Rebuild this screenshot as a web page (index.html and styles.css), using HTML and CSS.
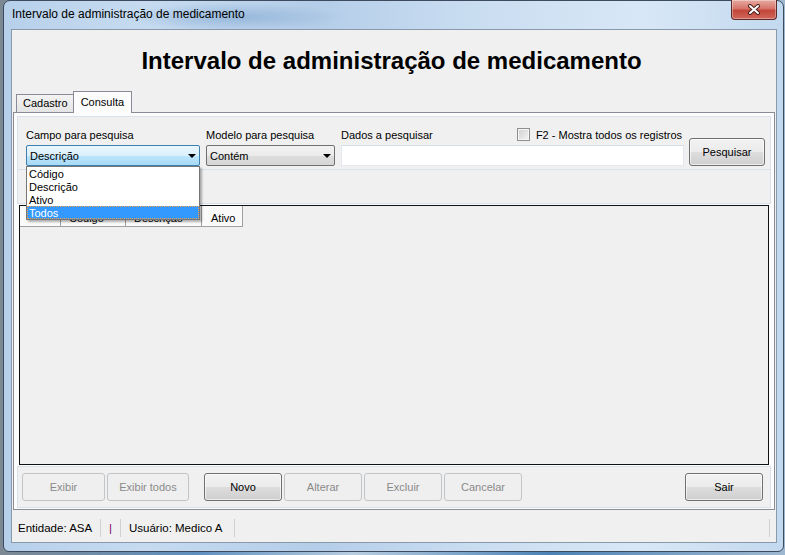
FILE: index.html
```html
<!DOCTYPE html>
<html lang="pt-BR">
  <head>
    <meta charset="UTF-8" />
    <meta name="viewport" content="width=device-width, initial-scale=1.0" />
    <title>Intervalo de administração de medicamento</title>
    <link rel="stylesheet" href="styles.css">
  </head>
  <body>
    <div class="window">
      <div class="titlebar">
        <span class="title">Intervalo de administração de medicamento</span>
        <button class="close" type="button">
          <svg width="14" height="11" viewBox="0 0 14 11">
            <path d="M3 2 L11 9 M11 2 L3 9" stroke="#4a1f1a" stroke-width="4" stroke-linecap="round" />
            <path d="M3 2 L11 9 M11 2 L3 9" stroke="#ffffff" stroke-width="2" stroke-linecap="round" />
          </svg>
        </button>
      </div>

      <div class="client">
        <h1 class="heading">Intervalo de administração de medicamento</h1>

        <div class="tabs">
          <div class="tab">Cadastro</div>
          <div class="tab active">Consulta</div>
        </div>

        <div class="tabpage">
          <!-- filtros da consulta -->
          <div class="panel search">
            <div class="field campo">
              <label class="lbl">Campo para pesquisa</label>
              <div class="combo open">
                <span>Descrição</span>
                <span class="arrow"></span>
              </div>
              <ul class="dropdown">
                <li>Código</li>
                <li>Descrição</li>
                <li>Ativo</li>
                <li class="sel">Todos</li>
              </ul>
            </div>

            <div class="field modelo">
              <label class="lbl">Modelo para pesquisa</label>
              <div class="combo">
                <span>Contém</span>
                <span class="arrow"></span>
              </div>
            </div>

            <div class="field dados">
              <div class="lbl-row">
                <label class="lbl">Dados a pesquisar</label>
                <label class="check">
                  <span class="box"></span>
                  F2 - Mostra todos os registros
                </label>
              </div>
              <div class="input"></div>
            </div>

            <button class="btn btn-search" type="button">Pesquisar</button>
          </div>

          <div class="panel strip"></div>

          <!-- grade de resultados -->
          <div class="grid">
            <div class="grid-head">
              <div class="cell ind"></div>
              <div class="cell c-cod">Código</div>
              <div class="cell c-desc">Descrição</div>
              <div class="cell c-ativo">Ativo</div>
            </div>
          </div>

          <div class="panel actions">
            <button class="btn w83" type="button" disabled>Exibir</button>
            <button class="btn w82" type="button" disabled>Exibir todos</button>
            <button class="btn novo" type="button">Novo</button>
            <button class="btn" type="button" disabled>Alterar</button>
            <button class="btn" type="button" disabled>Excluir</button>
            <button class="btn" type="button" disabled>Cancelar</button>
            <button class="btn sair" type="button">Sair</button>
          </div>
        </div>

        <div class="statusbar">
          <div class="sb-item sb-ent">Entidade: ASA</div>
          <div class="sb-item sb-sep"><span class="pipe">|</span></div>
          <div class="sb-item sb-user">Usuário: Medico A</div>
          <div class="sb-item sb-rest"></div>
        </div>
      </div>
    </div>
  </body>
</html>
```

FILE: styles.css
```css
* {
  margin: 0;
  padding: 0;
  box-sizing: border-box;
}

body {
  width: 785px;
  height: 555px;
  overflow: hidden;
  background: linear-gradient(to right, #7d8893 0%, #5f8fbf 25%, #b8cde0 45%, #4c82b6 70%, #9fb8d0 100%);
  font-family: "Liberation Sans", Arial, sans-serif;
  font-size: 11px;
  color: #000;
}

/* moldura da janela (Aero) */
.window {
  margin-left: 3px;
  width: 781px;
  height: 552px;
  border: 1px solid #3c4c5e;
  border-radius: 7px 7px 6px 6px;
  padding: 0 6px 8px 7px;
  display: flex;
  flex-direction: column;
  background:
    radial-gradient(ellipse 110px 14px at 230px 16px, rgba(120, 160, 205, 0.55), transparent),
    linear-gradient(to right, #b7d0ea 0%, #c6dbf0 18%, #b4cde8 40%, #c9ddf1 60%, #d8e7f6 82%, #c3d9ef 100%);
}

.titlebar {
  height: 28px;
  display: flex;
  align-items: flex-start;
  justify-content: space-between;
}

.title {
  padding: 6px 0 0 1px;
  font-size: 12px;
  line-height: 15px;
}

.close {
  width: 46px;
  height: 20px;
  margin-top: -1px;
  border: 1px solid #5b2a26;
  border-top: none;
  border-radius: 0 0 4px 4px;
  background: linear-gradient(#e6aaa0 0%, #d7746a 45%, #c4463b 55%, #d0665a 100%);
  box-shadow: inset 0 0 0 1px rgba(255, 255, 255, 0.35);
  display: flex;
  align-items: center;
  justify-content: center;
}

.client {
  height: 514px;
  border: 1px solid #8899ab;
  background: #f0f0f0;
  display: flex;
  flex-direction: column;
}

.heading {
  height: 61px;
  padding-right: 5px;
  text-align: center;
  font: bold 24px "Liberation Sans", Arial, sans-serif;
  line-height: 61px;
}

/* abas */
.tabs {
  height: 21px;
  display: flex;
  align-items: flex-end;
  margin-left: 1px;
  padding-left: 3px;
}

.tab {
  height: 18px;
  line-height: 17px;
  padding: 0 6px;
  border: 1px solid #898c95;
  border-bottom: none;
  background: linear-gradient(#f3f3f3, #e4e4e4);
  color: #000;
}

.tab.active {
  position: relative;
  z-index: 1;
  height: 22px;
  line-height: 20px;
  margin: 0 0 -1px -2px;
  padding: 0 7px;
  background: #fcfcfc;
}

.tabpage {
  height: 398px;
  margin: 0 1px 0 1px;
  padding: 0 3px 1px 3px;
  border: 1px solid #898c95;
  background: #fcfcfc;
}

.panel {
  border: 1px solid #d9e2ea;
  background: #f0f0f0;
}

/* filtros */
.search {
  height: 54px;
  margin-top: 3px;
  padding: 12px 5px 3px 8px;
  display: flex;
  align-items: flex-end;
  gap: 6px;
}

.field {
  display: flex;
  flex-direction: column;
}

.campo {
  position: relative;
  width: 174px;
}

.modelo {
  width: 129px;
}

.dados {
  width: 343px;
  margin-right: -1px;
}

.lbl {
  height: 13px;
  line-height: 13px;
  margin-bottom: 3px;
  white-space: nowrap;
}

.lbl-row {
  display: flex;
  justify-content: space-between;
  padding-right: 2px;
}

.check {
  display: flex;
  align-items: flex-start;
  gap: 6px;
  line-height: 13px;
  white-space: nowrap;
}

.box {
  width: 13px;
  height: 13px;
  margin-top: -1px;
  border: 1px solid #8f8f8f;
  background: linear-gradient(135deg, #d0d0d0, #f4f4f4);
  box-shadow: inset 0 0 0 1px #f6f6f6;
}

.combo {
  height: 21px;
  padding: 0 3px 0 3px;
  border: 1px solid #707070;
  border-radius: 2px;
  background: linear-gradient(#f2f2f2 0%, #ebebeb 50%, #dddddd 51%, #d6d6d6 100%);
  display: flex;
  align-items: center;
  justify-content: space-between;
}

.combo.open {
  border-color: #3c7fb1;
  background: linear-gradient(#eaf6fd 0%, #d9f0fc 50%, #bee6fd 51%, #a7d9f5 100%);
}

.arrow {
  width: 0;
  height: 0;
  border-left: 4px solid transparent;
  border-right: 4px solid transparent;
  border-top: 4px solid #000;
}

.input {
  height: 21px;
  border: 1px solid #e2e8ee;
  border-top-color: #d5dde5;
  background: #fff;
}

/* lista aberta do combo */
.dropdown {
  position: absolute;
  left: 0;
  top: 37px;
  z-index: 5;
  width: 174px;
  list-style: none;
  border: 1px solid #767676;
  background: #fff;
  box-shadow: 2px 2px 2px rgba(0, 0, 0, 0.3);
}

.dropdown li {
  height: 13px;
  line-height: 14px;
  padding-left: 2px;
}

.dropdown .sel {
  background: #3399ff;
  color: #fff;
  outline: 1px dotted #f0a050;
  outline-offset: -1px;
}

/* botoes */
.btn {
  width: 78px;
  height: 28px;
  border: 1px solid #707070;
  border-radius: 3px;
  background: linear-gradient(#f2f2f2 0%, #ebebeb 50%, #dddddd 51%, #cfcfcf 100%);
  box-shadow: inset 0 0 0 1px rgba(255, 255, 255, 0.6);
  font: 11px "Liberation Sans", Arial, sans-serif;
  color: #000;
}

.btn:disabled {
  border-color: #c2c5c8;
  background: #efefef;
  box-shadow: none;
  color: #8a8a8a;
}

.btn-search {
  width: 76px;
}

.w83 {
  width: 83px;
}

.w82 {
  width: 82px;
}

.novo {
  margin-left: 13px;
}

.sair {
  margin-left: auto;
}

.strip {
  height: 34px;
  border-top: none;
}

/* grade */
.grid {
  width: 750px;
  height: 260px;
  margin: 1px 0 0 2px;
  border: 1px solid #111;
  background: #f0f0f0;
}

.grid-head {
  display: flex;
  height: 21px;
}

.cell {
  height: 21px;
  line-height: 18px;
  padding: 3px 0 0 8px;
  border-right: 1px solid #a0a0a0;
  border-bottom: 1px solid #a0a0a0;
  background: #fafafa;
}

.ind {
  width: 41px;
}

.c-cod {
  width: 65px;
}

.c-desc {
  width: 76px;
}

.c-ativo {
  width: 41px;
  padding-left: 9px;
}

.actions {
  height: 42px;
  margin-top: 1px;
  padding: 0 7px 0 4px;
  display: flex;
  align-items: center;
  gap: 2px;
}

/* barra de status */
.statusbar {
  flex: 1;
  display: flex;
  align-items: center;
  padding: 4px 6px 0 0;
  font-size: 11.5px;
}

.sb-item {
  height: 18px;
  line-height: 18px;
  border-right: 1px solid #d0d0d0;
  white-space: nowrap;
}

.sb-ent {
  width: 89px;
  padding-left: 6px;
}

.sb-sep {
  width: 20px;
  text-align: center;
}

.pipe {
  color: #800060;
}

.sb-user {
  width: 114px;
  padding-left: 8px;
}

.sb-rest {
  flex: 1;
}
```
